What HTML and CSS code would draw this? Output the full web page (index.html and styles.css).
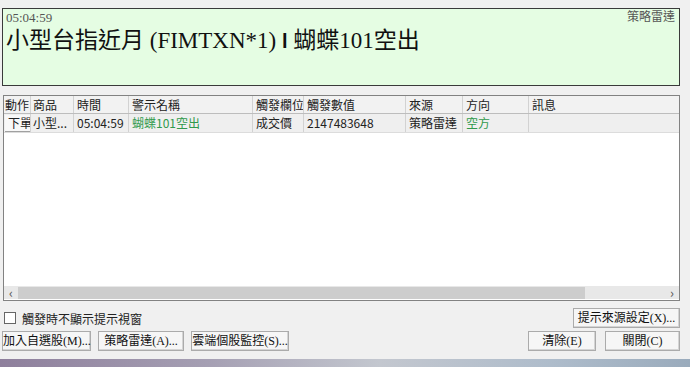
FILE: index.html
```html
<!DOCTYPE html>
<html lang="zh-Hant">
<head>
    <meta charset="UTF-8">
    <title>警示</title>
    <link rel="stylesheet" href="styles.css">
</head>
<body>
    <div class="window">
        <div class="alert">
            <div class="alert-top">
                <span class="alert-time">05:04:59</span>
                <span class="alert-source">策略雷達</span>
            </div>
            <div class="alert-title">小型台指近月 (FIMTXN*1) <b class="sep">l</b> 蝴蝶101空出</div>
        </div>

        <div class="list">
            <div class="row head">
                <div class="c c-act">動作</div>
                <div class="c c-item">商品</div>
                <div class="c c-time">時間</div>
                <div class="c c-name">警示名稱</div>
                <div class="c c-field">觸發欄位</div>
                <div class="c c-value">觸發數值</div>
                <div class="c c-src">來源</div>
                <div class="c c-dir">方向</div>
                <div class="c c-msg">訊息</div>
            </div>
            <div class="row data">
                <div class="c c-act"><span class="order-btn">下單</span></div>
                <div class="c c-item">小型...</div>
                <div class="c c-time">05:04:59</div>
                <div class="c c-name green">蝴蝶101空出</div>
                <div class="c c-field">成交價</div>
                <div class="c c-value">2147483648</div>
                <div class="c c-src">策略雷達</div>
                <div class="c c-dir green">空方</div>
                <div class="c c-msg"></div>
            </div>
            <div class="list-empty"></div>
            <div class="hscroll">
                <span class="arrow">&lsaquo;</span>
                <span class="thumb"></span>
                <span class="track"></span>
                <span class="arrow">&rsaquo;</span>
            </div>
        </div>

        <div class="options">
            <label class="check"><span class="box"></span>觸發時不顯示提示視窗</label>
            <button class="btn btn-src">提示來源設定(X)...</button>
        </div>

        <div class="actions">
            <button class="btn btn-add">加入自選股(M)...</button>
            <button class="btn btn-radar">策略雷達(A)...</button>
            <button class="btn btn-cloud">雲端個股監控(S)...</button>
            <span class="spacer"></span>
            <button class="btn btn-clear">清除(E)</button>
            <button class="btn btn-close">關閉(C)</button>
        </div>
    </div>
    <div class="desktop"></div>
</body>
</html>
```

FILE: styles.css
```css
body {
    margin: 0;
    width: 690px;
    height: 367px;
    overflow: hidden;
    background: #f0f0f0;
    font-family: "Noto Sans CJK TC", "Liberation Sans", sans-serif;
    font-size: 12px;
    color: #222;
}
.window {
    height: 359px;
    display: flex;
    flex-direction: column;
}
.alert {
    margin: 8px 10px 0 2px;
    height: 76px;
    border: 1px solid #3a3a3a;
    background: #e5fde3;
    padding: 0 4px 0 3px;
    font-family: "Liberation Serif", "Noto Sans CJK TC", serif;
}
.alert-top {
    display: flex;
    justify-content: space-between;
    height: 17px;
    line-height: 17px;
    font-size: 13px;
    color: #555;
}
.alert-time {
    font-size: 13px;
}
.alert-source {
    font-size: 12px;
}
.alert-title {
    font-size: 23px;
    line-height: 30px;
    color: #111;
    white-space: nowrap;
}
.sep {
    font-family: "Liberation Sans", sans-serif;
    font-size: 20px;
}
.list {
    margin: 9px 10px 0 3px;
    height: 204px;
    border: 1px solid #828282;
    background: #fff;
    display: flex;
    flex-direction: column;
}
.row {
    display: flex;
    height: 17px;
    line-height: 17px;
}
.row.head {
    background: #f2f2f2;
    border-bottom: 1px solid #bdbdbd;
}
.row.data {
    height: 18px;
    line-height: 18px;
    background: #efefef;
    border-bottom: 1px solid #dcdcdc;
}
.c {
    padding-left: 2px;
    border-right: 1px solid #d2d2d2;
    white-space: nowrap;
    overflow: hidden;
    box-sizing: border-box;
}
.c-act { width: 27px; padding-left: 1px; }
.c-item { width: 43px; }
.c-time { width: 55px; padding-left: 3px; }
.c-name { width: 124px; padding-left: 3px; }
.c-field { width: 51px; padding-left: 3px; }
.c-value { width: 102px; padding-left: 3px; }
.c-src { width: 57px; padding-left: 3px; }
.c-dir { width: 66px; padding-left: 3px; }
.c-msg { flex: 1; border-right: none; padding-left: 3px; }
.green {
    color: #2f9a4c;
}
.order-btn {
    display: inline-block;
    height: 16px;
    line-height: 16px;
    padding: 0 1px 0 3px;
    background: #f8f8f8;
    border-right: 1px solid #a0a0a0;
    border-bottom: 1px solid #a0a0a0;
}
.list-empty {
    flex: 1;
}
.hscroll {
    display: flex;
    align-items: center;
    height: 13px;
    background: #e8e8e8;
    margin-bottom: 1px;
}
.arrow {
    width: 14px;
    text-align: center;
    font-size: 13px;
    line-height: 13px;
    color: #555;
}
.thumb {
    width: 567px;
    height: 12px;
    background: #cdcdcd;
}
.track {
    flex: 1;
}
.options {
    display: flex;
    justify-content: space-between;
    align-items: center;
    margin: 7px 10px 0 4px;
    height: 20px;
}
.check {
    display: flex;
    align-items: center;
    gap: 6px;
}
.box {
    width: 10px;
    height: 10px;
    border: 1px solid #666;
    background: #fff;
}
.btn {
    height: 20px;
    padding: 0;
    font-family: "Liberation Serif", "Noto Sans CJK TC", serif;
    font-size: 12px;
    line-height: 18px;
    white-space: nowrap;
    color: #111;
    background: #f6f6f6;
    border: 1px solid #ababab;
    border-radius: 0;
    box-shadow: inset -1px -1px 0 #d4d4d4;
}
.btn-src { width: 107px; }
.actions {
    display: flex;
    gap: 7px;
    margin: 3px 10px 0 2px;
    height: 20px;
}
.btn-add { width: 89px; }
.btn-radar { width: 86px; }
.btn-cloud { width: 98px; }
.btn-clear { width: 68px; }
.btn-close { width: 75px; margin-left: 2px; }
.spacer {
    flex: 1;
}
.desktop {
    height: 8px;
    background: linear-gradient(90deg, #8e7f9c 0%, #a59fb3 30%, #c3c7cf 55%, #aebccb 80%, #9aabbc 100%);
}
```
